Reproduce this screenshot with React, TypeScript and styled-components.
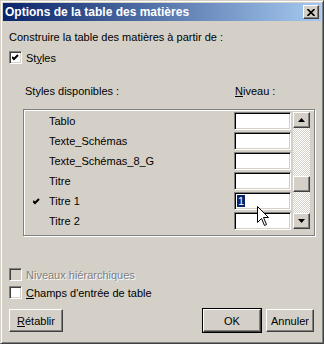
import styled, { createGlobalStyle } from 'styled-components';

const GlobalStyle = createGlobalStyle`
  html, body { margin: 0; padding: 0; background: #d4d0c8; }
  body { font-family: 'Liberation Sans', Arial, sans-serif; font-size: 11px; color: #000; }
`;

const Window = styled.div`
  box-sizing: border-box;
  width: 324px;
  height: 344px;
  background: #d4d0c8;
  border: 1px solid;
  border-color: #d4d0c8 #404040 #404040 #d4d0c8;
  box-shadow: inset 1px 1px 0 #fff, inset -1px -1px 0 #808080;
  padding: 2px;
  display: flex;
  flex-direction: column;
`;

const TitleBar = styled.div`
  height: 18px;
  display: flex;
  align-items: center;
  justify-content: space-between;
  padding: 0 2px 0 2px;
  background: linear-gradient(to right, #0a246a, #a6caf0);
  color: #fff;
  font-weight: bold;
  font-size: 12px;
`;

const Raised = styled.div`
  box-sizing: border-box;
  background: #d4d0c8;
  border: 1px solid;
  border-color: #fff #404040 #404040 #fff;
  box-shadow: inset -1px -1px 0 #808080;
`;

const CloseButton = styled(Raised)`
  width: 16px;
  height: 14px;
  display: flex;
  align-items: center;
  justify-content: center;
`;

const Body = styled.div`
  display: flex;
  flex-direction: column;
  padding: 0 6px;
`;

const Label = styled.div<{ $top: number }>`
  margin-top: ${p => p.$top}px;
  height: 13px;
  line-height: 13px;
  white-space: nowrap;
`;

const HeaderRow = styled.div`
  margin-top: 21px;
  height: 13px;
  line-height: 13px;
  display: grid;
  grid-template-columns: 210px auto;
  padding-left: 16px;
`;

const CheckRow = styled.label<{ $top: number; $disabled?: boolean }>`
  margin-top: ${p => p.$top}px;
  display: flex;
  align-items: center;
  gap: 4px;
  height: 13px;
  color: ${p => (p.$disabled ? '#808080' : '#000')};
  ${p => p.$disabled && 'text-shadow: 1px 1px 0 #fff;'}
`;

const Box = styled.span<{ $disabled?: boolean }>`
  box-sizing: border-box;
  width: 13px;
  height: 13px;
  flex: none;
  display: flex;
  align-items: center;
  justify-content: center;
  background: ${p => (p.$disabled ? '#d4d0c8' : '#fff')};
  border: 1px solid;
  border-color: #808080 #fff #fff #808080;
  box-shadow: inset 1px 1px 0 #404040, inset -1px -1px 0 #d4d0c8;
`;

const Frame = styled.div`
  position: relative;
  box-sizing: border-box;
  margin: 11px 0 0 14px;
  width: 292px;
  height: 127px;
  border: 1px solid #808080;
  box-shadow: 1px 1px 0 #fff, inset 1px 1px 0 #fff;
  padding: 1px 4px 0 9px;
  display: flex;
  align-items: flex-start;
`;

const Rows = styled.div`
  display: flex;
  flex-direction: column;
`;

const Row = styled.div`
  height: 20px;
  display: grid;
  grid-template-columns: 16px 185px 57px;
  align-items: center;
`;

const Field = styled.div`
  box-sizing: border-box;
  height: 18px;
  margin-top: 1px;
  align-self: start;
  background: #fff;
  border: 1px solid;
  border-color: #808080 #fff #fff #808080;
  box-shadow: inset 1px 1px 0 #000, inset -1px -1px 0 #d4d0c8;
  padding: 2px 2px 0 2px;
  line-height: 13px;
`;

const Selected = styled.span`
  background: #0a246a;
  color: #fff;
  padding: 0 1px;
`;

const Scrollbar = styled.div`
  margin: 1px 0 0 2px;
  width: 17px;
  height: 117px;
  display: flex;
  flex-direction: column;
  background-color: #fff;
  background-image: repeating-conic-gradient(#fff 0 25%, #d4d0c8 0 50%);
  background-size: 2px 2px;
`;

const ScrollButton = styled(Raised)<{ $gap?: number }>`
  width: 17px;
  height: 16px;
  flex: none;
  margin-top: ${p => p.$gap ?? 0}px;
  display: flex;
  align-items: center;
  justify-content: center;
`;

const Cursor = styled.svg`
  position: absolute;
  left: 233px;
  top: 96px;
`;

const Buttons = styled.div`
  margin-top: 10px;
  display: flex;
  align-items: center;
  gap: 5px;
  padding-right: 1px;
`;

const Button = styled(Raised)<{ $w: number; $default?: boolean }>`
  width: ${p => p.$w}px;
  height: 23px;
  display: flex;
  align-items: center;
  justify-content: center;
  ${p => p.$default && `outline: 1px solid #000;`}
`;

const Spacer = styled.div`
  flex: 1;
`;

const Arrow = ({ up }: { up?: boolean }) => (
  <svg width="7" height="4" viewBox="0 0 7 4">
    <path d={up ? 'M3.5 0 L7 4 L0 4 Z' : 'M0 0 L7 0 L3.5 4 Z'} fill="#000" />
  </svg>
);

const Tick = () => (
  <svg width="7" height="7" viewBox="0 0 7 7">
    <path d="M0 3 L2 5 L6 1" stroke="#000" strokeWidth="2" fill="none" />
  </svg>
);

const styles = ['Tablo', 'Texte_Schémas', 'Texte_Schémas_8_G', 'Titre', 'Titre 1', 'Titre 2'];

export default function App() {
  return (
    <>
      <GlobalStyle />
      <Window>
        <TitleBar>
          <span>Options de la table des matières</span>
          <CloseButton>
            <svg width="8" height="7" viewBox="0 0 8 7">
              <path d="M0.5 0 L7.5 7 M7.5 0 L0.5 7" stroke="#000" strokeWidth="1.6" />
            </svg>
          </CloseButton>
        </TitleBar>
        <Body>
          <Label $top={10}>Construire la table des matières à partir de :</Label>
          <CheckRow $top={7}>
            <Box>
              <Tick />
            </Box>
            <span>
              St<u>y</u>les
            </span>
          </CheckRow>
          <HeaderRow>
            <span>Styles disponibles :</span>
            <span>
              <u>N</u>iveau :
            </span>
          </HeaderRow>
          <Frame>
            <Rows>
              {styles.map(s => (
                <Row key={s}>
                  <span>{s === 'Titre 1' && <Tick />}</span>
                  <span>{s}</span>
                  <Field>{s === 'Titre 1' && <Selected>1</Selected>}</Field>
                </Row>
              ))}
            </Rows>
            <Scrollbar>
              <ScrollButton>
                <Arrow up />
              </ScrollButton>
              <ScrollButton $gap={48} />
              <ScrollButton $gap={21}>
                <Arrow />
              </ScrollButton>
            </Scrollbar>
            <Cursor width="13" height="21" viewBox="0 0 13 21">
              <path
                d="M0.5 0.5 L0.5 16.5 L4.5 12.5 L7.5 19.5 L9.5 18.5 L6.5 11.5 L11.5 11.5 Z"
                fill="#fff"
                stroke="#000"
                strokeWidth="1"
              />
            </Cursor>
          </Frame>
          <CheckRow $top={32} $disabled>
            <Box $disabled />
            <span>Niveaux hiérarchiques</span>
          </CheckRow>
          <CheckRow $top={5}>
            <Box />
            <span>
              <u>C</u>hamps d'entrée de table
            </span>
          </CheckRow>
          <Buttons>
            <Button $w={54}>
              <span>
                <u>R</u>établir
              </span>
            </Button>
            <Spacer />
            <Button $w={58} $default>
              OK
            </Button>
            <Button $w={48}>Annuler</Button>
          </Buttons>
        </Body>
      </Window>
    </>
  );
}
